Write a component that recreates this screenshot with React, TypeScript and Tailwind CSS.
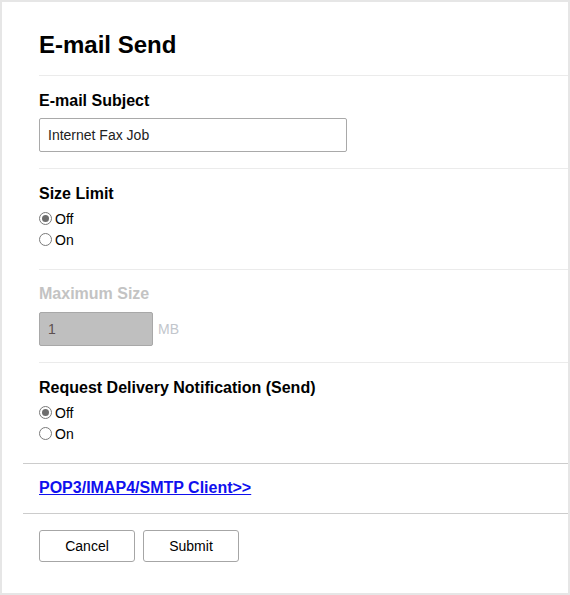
import React from "react";

function Radio({ checked, label }: { checked: boolean; label: string }) {
  return (
    <div className="flex h-[21px] items-center">
      <span className="flex h-[13px] w-[13px] items-center justify-center rounded-full border border-[#7a7a7a] bg-white">
        {checked && <span className="h-[7px] w-[7px] rounded-full bg-[#6e6e6e]" />}
      </span>
      <span className="ml-[3px] text-[14px] leading-[16px] text-black">{label}</span>
    </div>
  );
}

export default function App() {
  return (
    <div
      className="h-[595px] w-[570px] bg-[#e6e6e6] p-[2px]"
      style={{ fontFamily: '"Liberation Sans", Arial, sans-serif' }}
    >
      <div className="flex h-full flex-col bg-white">
        <div className="ml-[37px] border-b border-[#ebebeb] pb-[16px] pt-[29px]">
          <h1 className="text-[24px] font-bold leading-[28px] text-black">E-mail Send</h1>
        </div>

        <div className="ml-[37px] border-b border-[#ebebeb] pb-[16px] pt-[16px]">
          <div className="text-[16px] font-bold leading-[18px] text-black">E-mail Subject</div>
          <div className="mt-[8px] flex h-[34px] w-[308px] items-center rounded-[2px] border border-[#a9a9a9] px-[8px] text-[14px] text-[#222]">
            Internet Fax Job
          </div>
        </div>

        <div className="ml-[37px] border-b border-[#ebebeb] pb-[19px] pt-[16px]">
          <div className="text-[16px] font-bold leading-[18px] text-black">Size Limit</div>
          <div className="mt-[5px]">
            <Radio checked label="Off" />
            <Radio checked={false} label="On" />
          </div>
        </div>

        <div className="ml-[37px] border-b border-[#ebebeb] pb-[16px] pt-[15px]">
          <div className="text-[16px] font-bold leading-[18px] text-[#c3c3c3]">Maximum Size</div>
          <div className="mt-[9px] flex items-center">
            <div className="flex h-[34px] w-[114px] items-center rounded-[2px] border border-[#a8a8a8] bg-[#bfbfbf] px-[8px] text-[14px] text-[#5c4f4f]">
              1
            </div>
            <span className="ml-[5px] text-[14px] text-[#c2c6cc]">MB</span>
          </div>
        </div>

        <div className="ml-[37px] pb-[19px] pt-[16px]">
          <div className="text-[16px] font-bold leading-[18px] text-black">
            Request Delivery Notification (Send)
          </div>
          <div className="mt-[5px]">
            <Radio checked label="Off" />
            <Radio checked={false} label="On" />
          </div>
        </div>

        <div className="ml-[21px] border-y border-[#cccccc] pb-[16px] pl-[16px] pt-[15px] text-[16px] leading-[18px]">
          <a href="#" className="font-bold text-[#1010ee] underline">
            POP3/IMAP4/SMTP Client&gt;&gt;
          </a>
        </div>

        <div className="ml-[37px] flex gap-[8px] pt-[16px]">
          <button className="h-[32px] w-[96px] rounded-[3px] border border-[#a6a6a6] bg-white text-[14px] text-black">
            Cancel
          </button>
          <button className="h-[32px] w-[96px] rounded-[3px] border border-[#a6a6a6] bg-white text-[14px] text-black">
            Submit
          </button>
        </div>
      </div>
    </div>
  );
}
